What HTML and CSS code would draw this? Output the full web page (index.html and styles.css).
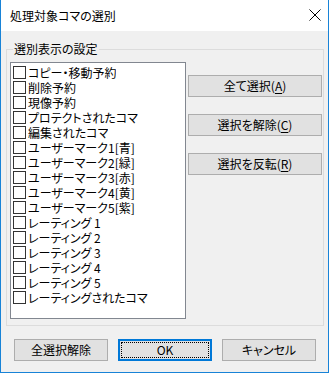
FILE: index.html
```html
<!DOCTYPE html>
<html lang="ja">
<head>
  <meta charset="UTF-8" />
  <title>処理対象コマの選別</title>
  <link rel="stylesheet" href="styles.css">
</head>
<body>
  <div class="window">
    <div class="titlebar">
      <span class="title">処理対象コマの選別</span>
      <svg class="close" width="12" height="12" viewBox="0 0 12 12">
        <path d="M0.5 0.5 L11.5 11.5 M11.5 0.5 L0.5 11.5" stroke="#000" stroke-width="1" fill="none"/>
      </svg>
    </div>
    <div class="dialog">
      <fieldset class="group">
        <legend>選別表示の設定</legend>
        <div class="group-content">
          <ul class="list">
            <li><span class="box"></span><span class="label">コピー・移動予約</span></li>
            <li><span class="box"></span><span class="label">削除予約</span></li>
            <li><span class="box"></span><span class="label">現像予約</span></li>
            <li><span class="box"></span><span class="label">プロテクトされたコマ</span></li>
            <li><span class="box"></span><span class="label">編集されたコマ</span></li>
            <li><span class="box"></span><span class="label">ユーザーマーク1[青]</span></li>
            <li><span class="box"></span><span class="label">ユーザーマーク2[緑]</span></li>
            <li><span class="box"></span><span class="label">ユーザーマーク3[赤]</span></li>
            <li><span class="box"></span><span class="label">ユーザーマーク4[黄]</span></li>
            <li><span class="box"></span><span class="label">ユーザーマーク5[紫]</span></li>
            <li><span class="box"></span><span class="label">レーティング 1</span></li>
            <li><span class="box"></span><span class="label">レーティング 2</span></li>
            <li><span class="box"></span><span class="label">レーティング 3</span></li>
            <li><span class="box"></span><span class="label">レーティング 4</span></li>
            <li><span class="box"></span><span class="label">レーティング 5</span></li>
            <li><span class="box"></span><span class="label">レーティングされたコマ</span></li>
          </ul>
          <div class="side-buttons">
            <button class="btn wide">全て選択(<u>A</u>)</button>
            <button class="btn wide">選択を解除(<u>C</u>)</button>
            <button class="btn wide">選択を反転(<u>R</u>)</button>
          </div>
        </div>
      </fieldset>
      <div class="footer">
        <button class="btn">全選択解除</button>
        <button class="btn default"><span class="focus">OK</span></button>
        <button class="btn">キャンセル</button>
      </div>
    </div>
  </div>
</body>
</html>
```

FILE: styles.css
```css
body {
  margin: 0;
  font-family: "Noto Sans CJK JP", sans-serif;
  font-size: 12px;
  color: #000;
  background: #f0f0f0;
}

.window {
  width: 329px;
  height: 373px;
  box-sizing: border-box;
  border: 1px solid #1883d7;
  border-top: none;
  background: #f0f0f0;
}

.titlebar {
  height: 31px;
  background: #fff;
  display: flex;
  align-items: center;
  justify-content: space-between;
  padding: 0 7px 0 9px;
}

.title {
  font-size: 12px;
  font-feature-settings: "palt";
  margin-top: -1px;
}

.close {
  display: block;
  margin-top: -1px;
}

.group {
  margin: 10px 4px 0 5px;
  padding: 0 1px 6px 3px;
  border: 1px solid #dcdcdc;
  min-width: 0;
}

.group legend {
  margin-left: 3px;
  padding: 0 1px;
  line-height: 16px;
  font-feature-settings: "palt";
}

.group-content {
  display: flex;
  gap: 2px;
  padding-top: 5px;
}

.list {
  list-style: none;
  margin: 0;
  padding: 2px 0 0 2px;
  width: 176px;
  height: 257px;
  box-sizing: border-box;
  background: #fff;
  border: 1px solid #828790;
}

.list li {
  display: flex;
  align-items: center;
  height: 15px;
  white-space: nowrap;
  font-feature-settings: "palt";
}

.label {
  display: block;
  height: 15px;
  line-height: 15px;
  overflow: hidden;
}

.box {
  width: 11px;
  height: 11px;
  border: 1px solid #333;
  background: #fff;
  margin-right: 2px;
  flex-shrink: 0;
}

.side-buttons {
  display: flex;
  flex-direction: column;
  gap: 17px;
  padding-top: 13px;
}

.btn {
  font-family: inherit;
  font-size: 12px;
  font-feature-settings: "palt";
  color: #000;
  background: #e1e1e1;
  border: 1px solid #adadad;
  width: 94px;
  height: 22px;
  padding: 0;
  line-height: 20px;
}

.btn.wide {
  width: 134px;
}

.btn u {
  text-decoration-thickness: 1px;
  text-underline-offset: 2px;
}

.footer {
  display: flex;
  gap: 10px;
  padding: 13px 0 0 13px;
}

.btn.default {
  border: 2px solid #0078d7;
  padding: 1px;
}

.focus {
  display: block;
  height: 100%;
  box-sizing: border-box;
  border: 1px dotted #000;
  line-height: 14px;
  font-size: 12px;
}
```
